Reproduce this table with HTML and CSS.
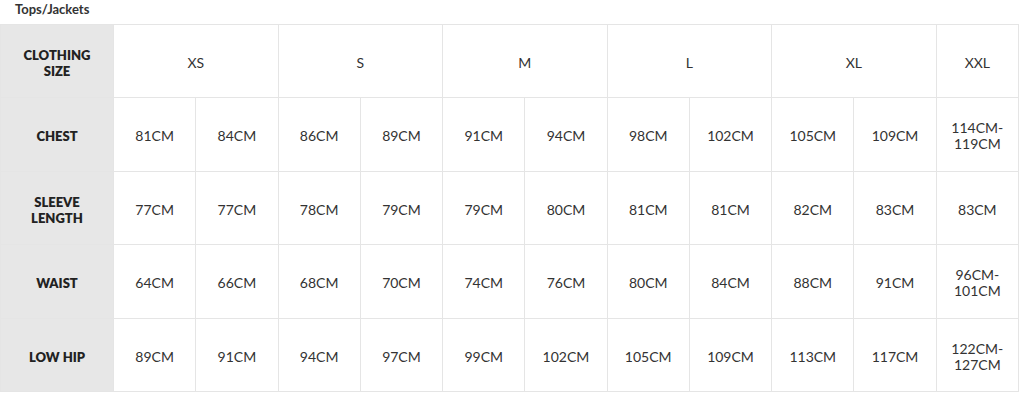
FILE: index.html
```html
<!DOCTYPE html>
<html>
<head>
<meta charset="utf-8">
<link rel="stylesheet" href="styles.css">
</head>
<body>
<div class="title">Tops/Jackets</div>
<table class="size-table">
  <colgroup>
    <col class="c-label">
    <col><col><col><col><col><col><col><col><col><col><col>
  </colgroup>
  <tr class="r-short">
    <th>CLOTHING<br>SIZE</th>
    <td colspan="2">XS</td>
    <td colspan="2">S</td>
    <td colspan="2">M</td>
    <td colspan="2">L</td>
    <td colspan="2">XL</td>
    <td>XXL</td>
  </tr>
  <tr class="r-tall">
    <th>CHEST</th>
    <td>81CM</td><td>84CM</td><td>86CM</td><td>89CM</td><td>91CM</td><td>94CM</td><td>98CM</td><td>102CM</td><td>105CM</td><td>109CM</td><td>114CM-<br>119CM</td>
  </tr>
  <tr class="r-short">
    <th>SLEEVE<br>LENGTH</th>
    <td>77CM</td><td>77CM</td><td>78CM</td><td>79CM</td><td>79CM</td><td>80CM</td><td>81CM</td><td>81CM</td><td>82CM</td><td>83CM</td><td>83CM</td>
  </tr>
  <tr class="r-tall">
    <th>WAIST</th>
    <td>64CM</td><td>66CM</td><td>68CM</td><td>70CM</td><td>74CM</td><td>76CM</td><td>80CM</td><td>84CM</td><td>88CM</td><td>91CM</td><td>96CM-<br>101CM</td>
  </tr>
  <tr class="r-short">
    <th>LOW HIP</th>
    <td>89CM</td><td>91CM</td><td>94CM</td><td>97CM</td><td>99CM</td><td>102CM</td><td>105CM</td><td>109CM</td><td>113CM</td><td>117CM</td><td>122CM-<br>127CM</td>
  </tr>
</table>
</body>
</html>
```
FILE: styles.css
```css
html, body {
  margin: 0;
  padding: 0;
  background: #fff;
}
body {
  font-family: Lato, "Open Sans", "Liberation Sans", sans-serif;
  color: #333;
}
.title {
  font-size: 13px;
  font-weight: 700;
  color: #333;
  padding-left: 15px;
  height: 24px;
  line-height: 19px;
}
.size-table {
  border-collapse: collapse;
  table-layout: fixed;
  width: 1019px;
}
.c-label {
  width: 113px;
}
.size-table th,
.size-table td {
  border: 1px solid #e5e5e5;
  text-align: center;
  vertical-align: middle;
  padding: 3px 0 0;
  line-height: 16px;
}
.r-short th,
.r-short td {
  height: 69px;
}
.r-tall th,
.r-tall td {
  height: 70px;
}
.size-table th {
  background: #e7e7e7;
  font-size: 13px;
  font-weight: 800;
  color: #222;
}
.size-table td {
  font-size: 14px;
  font-weight: 400;
  color: #333;
}
```
